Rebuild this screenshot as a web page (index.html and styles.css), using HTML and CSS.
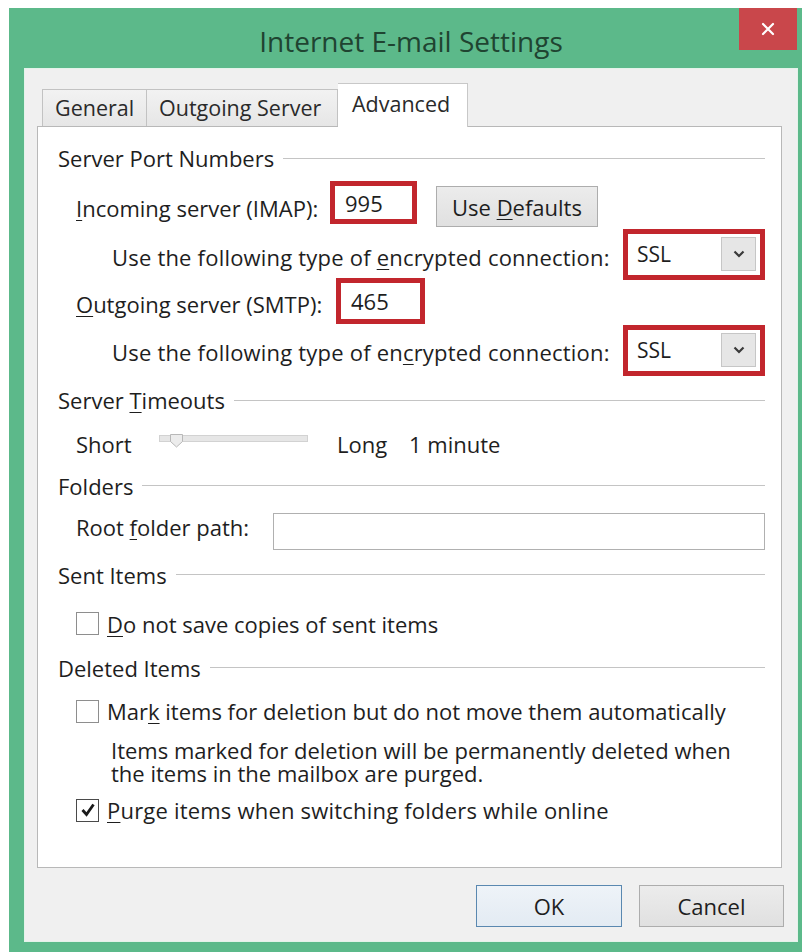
FILE: index.html
```html
<!DOCTYPE html>
<html lang="en">
<head>
<meta charset="utf-8">
<title>Internet E-mail Settings</title>
<link rel="stylesheet" href="styles.css">
</head>
<body>
<div class="window">
  <div class="titlebar">
    <h1 class="title">Internet E-mail Settings</h1>
    <button class="close" aria-label="Close">
      <svg width="14" height="14" viewBox="0 0 14 14"><path d="M2 2 L12 12 M12 2 L2 12" stroke="#fff" stroke-width="2.2" stroke-linecap="round"/></svg>
    </button>
  </div>

  <div class="client">
    <div class="tabs">
      <div class="tab tab-general">General</div>
      <div class="tab tab-outgoing">Outgoing Server</div>
      <div class="tab tab-advanced active">Advanced</div>
    </div>

    <div class="panel">
      <div class="group"><span>Server Port Numbers</span></div>
      <div class="row row-incoming">
        <span class="label label-in"><u>I</u>ncoming server (IMAP):</span>
        <span class="hl port port-in">995</span>
        <button class="btn btn-defaults">Use <u>D</u>efaults</button>
      </div>
      <div class="row row-enc1">
        <span class="label label-enc">Use the following type of <u>e</u>ncrypted connection:</span>
        <span class="hl select select-1"><span class="select-value">SSL</span><span class="drop"><svg width="12" height="8" viewBox="0 0 12 8"><path d="M1.5 1.5 L6 6 L10.5 1.5" fill="none" stroke="#3a3a3a" stroke-width="2.2"/></svg></span></span>
      </div>
      <div class="row row-outgoing">
        <span class="label label-out"><u>O</u>utgoing server (SMTP):</span>
        <span class="hl port port-out">465</span>
      </div>
      <div class="row row-enc2">
        <span class="label label-enc">Use the following type of en<u>c</u>rypted connection:</span>
        <span class="hl select select-2"><span class="select-value">SSL</span><span class="drop"><svg width="12" height="8" viewBox="0 0 12 8"><path d="M1.5 1.5 L6 6 L10.5 1.5" fill="none" stroke="#3a3a3a" stroke-width="2.2"/></svg></span></span>
      </div>

      <div class="group group-timeouts"><span>Server <u>T</u>imeouts</span></div>
      <div class="row row-slider">
        <span class="label label-short">Short</span>
        <svg class="slider" width="150" height="20" viewBox="0 0 150 20">
          <rect x="0.5" y="2.5" width="148" height="6" fill="#e6e6e6" stroke="#d2d2d2"/>
          <polygon points="11.5,1.5 23.5,1.5 23.5,8.5 17.5,14 11.5,8.5" fill="#ececec" stroke="#b8b8b8"/>
        </svg>
        <span class="label label-long">Long</span>
        <span class="label">1 minute</span>
      </div>

      <div class="group group-folders"><span>Folders</span></div>
      <div class="row row-root">
        <span class="label label-root">Root <u>f</u>older path:</span>
        <span class="textbox"></span>
      </div>

      <div class="group group-sent"><span>Sent Items</span></div>
      <div class="row row-nosave">
        <span class="check"></span>
        <span class="label"><u>D</u>o not save copies of sent items</span>
      </div>

      <div class="group group-deleted"><span>Deleted Items</span></div>
      <div class="row row-mark">
        <span class="check"></span>
        <span class="label">Mar<u>k</u> items for deletion but do not move them automatically</span>
      </div>
      <p class="note">Items marked for deletion will be permanently deleted when<br>the items in the mailbox are purged.</p>
      <div class="row row-purge">
        <span class="check checked"><svg width="16" height="16" viewBox="0 0 16 16"><path d="M2.5 8 L6.5 12.5 L13.5 2.5" fill="none" stroke="#1a1a1a" stroke-width="2.8"/></svg></span>
        <span class="label label-purge"><u>P</u>urge items when switching folders while online</span>
      </div>
    </div>

    <div class="footer">
      <button class="btn btn-ok">OK</button>
      <button class="btn btn-cancel">Cancel</button>
    </div>
  </div>
</div>
</body>
</html>
```

FILE: styles.css
```css
html, body {
  margin: 0;
  padding: 0;
  overflow: hidden;
  background: #ffffff;
}

body {
  font-family: "Open Sans", "Noto Sans", sans-serif;
  font-size: 22px;
  color: #1e1e1e;
}

u {
  text-decoration-thickness: 1px;
  text-underline-offset: 3px;
}

/* ---------- window frame ---------- */
.window {
  box-sizing: border-box;
  width: 804px;
  height: 960px;
  margin: 8px 0 0 9px;
  padding: 0 15px;
  background: #5cb98a;
}

.titlebar {
  height: 60px;
  display: grid;
  grid-template-columns: 1fr auto 1fr;
  align-items: start;
}

.title {
  grid-column: 2;
  margin: 0;
  padding-top: 7px;
  font-size: 28px;
  font-weight: 400;
  line-height: 52px;
  color: #1f4431;
  white-space: nowrap;
}

.close {
  grid-column: 3;
  justify-self: end;
  width: 58px;
  height: 42px;
  margin: 0 1px 0 0;
  padding: 0;
  border: none;
  background: #c9474b;
  display: flex;
  align-items: center;
  justify-content: center;
}

/* ---------- client area ---------- */
.client {
  box-sizing: border-box;
  height: 874px;
  padding-top: 14px;
  background: #f0f0f0;
  border: 1px solid #e4f3ea;
}

.tabs {
  display: flex;
  align-items: flex-end;
  height: 43px;
  margin-left: 17px;
  font-size: 21.5px;
}

.tab {
  box-sizing: border-box;
  height: 37px;
  padding-left: 12px;
  line-height: 35px;
  color: #2a2a2a;
  background: linear-gradient(#f2f2f2, #e6e6e6);
  border: 1px solid #c2c2c2;
  border-bottom: none;
  white-space: nowrap;
}

.tab-general { width: 105px; }
.tab-outgoing { width: 191px; border-left: none; }

.tab-advanced {
  width: 130px;
  border-left: none;
}

.tab.active {
  position: relative;
  z-index: 1;
  height: 44px;
  margin-bottom: -1px;
  padding-left: 14px;
  line-height: 40px;
  background: #ffffff;
  border-color: #c8c8c8;
}

.panel {
  box-sizing: border-box;
  width: 745px;
  height: 742px;
  margin-left: 12px;
  padding: 6px 16px 0 20px;
  background: #ffffff;
  border: 1px solid #b8b8b8;
}

/* group caption with the rule running to the right edge */
.group {
  display: flex;
  align-items: center;
  gap: 9px;
  height: 50px;
  white-space: nowrap;
}

.group::after {
  content: "";
  flex: 1;
  height: 1px;
  background: #c4c4c4;
}

.group-timeouts { height: 46px; }
.group-folders { height: 41px; }
.group-sent { height: 55px; }
.group-deleted { height: 45px; }

.row {
  display: flex;
  align-items: center;
  padding-left: 18px;
  white-space: nowrap;
}

.label { flex: none; }

.row-incoming { height: 50px; }
.row-enc1 { height: 48px; }
.row-outgoing { height: 46px; }
.row-enc2 { height: 50px; }
.row-slider { height: 42px; }
.row-root { height: 41px; }
.row-nosave { height: 43px; }
.row-mark { height: 42px; }
.row-purge { height: 50px; }

.label-in { width: 254px; }
.label-out { width: 260px; }

.label-enc {
  box-sizing: border-box;
  width: 547px;
  padding-left: 36px;
  letter-spacing: 0.2px;
}

.label-purge { letter-spacing: 0.2px; }
.label-short { width: 83px; }
.label-long { width: 72px; margin-left: 28px; }
.label-root { width: 197px; }

/* red highlight frames around the edited fields */
.hl {
  box-sizing: border-box;
  display: flex;
  align-items: center;
  background: #ffffff;
  border: 5px solid #c2262d;
}

.port {
  padding-left: 10px;
  font-size: 22px;
}

.port-in {
  width: 87px;
  height: 43px;
  margin-bottom: 11px;
}

.port-out {
  width: 89px;
  height: 46px;
  margin-bottom: 6px;
}

.select {
  width: 149px;
  height: 51px;
  justify-content: space-between;
  padding: 0 4px 0 9px;
  margin-bottom: 6px;
}

.select-2 { margin-bottom: 4px; }

.select-value { font-size: 21px; }

.drop {
  box-sizing: border-box;
  width: 35px;
  height: 34px;
  display: flex;
  align-items: center;
  justify-content: center;
  background: #e6e6e6;
  border: 1px solid #c6c6c6;
}

.btn {
  box-sizing: border-box;
  font-family: inherit;
  font-size: 22px;
  color: #1e1e1e;
  padding: 0;
  background: linear-gradient(#ececec, #e0e0e0);
  border: 1px solid #adadad;
}

.btn-defaults {
  width: 162px;
  height: 41px;
  margin-left: 19px;
  margin-bottom: 3px;
}

.slider { flex: none; margin-top: -2px; }

.textbox {
  box-sizing: border-box;
  width: 493px;
  height: 37px;
  margin-top: 9px;
  background: #ffffff;
  border: 1px solid #b0b0b0;
}

.check {
  box-sizing: border-box;
  flex: none;
  width: 23px;
  height: 23px;
  margin-right: 8px;
  display: flex;
  align-items: center;
  justify-content: center;
  background: #ffffff;
  border: 1px solid #8e8e8e;
}

.check.checked { border-color: #4a4a4a; }

.note {
  margin: 7px 0 0 53px;
  line-height: 23px;
}

/* ---------- dialog buttons ---------- */
.footer {
  display: flex;
  justify-content: flex-end;
  gap: 17px;
  margin-top: 17px;
  padding-right: 13px;
}

.btn-ok {
  width: 146px;
  height: 42px;
  background: linear-gradient(#eef3f8, #e3ebf3);
  border-color: #5a88b0;
}

.btn-cancel {
  width: 145px;
  height: 42px;
}
```
